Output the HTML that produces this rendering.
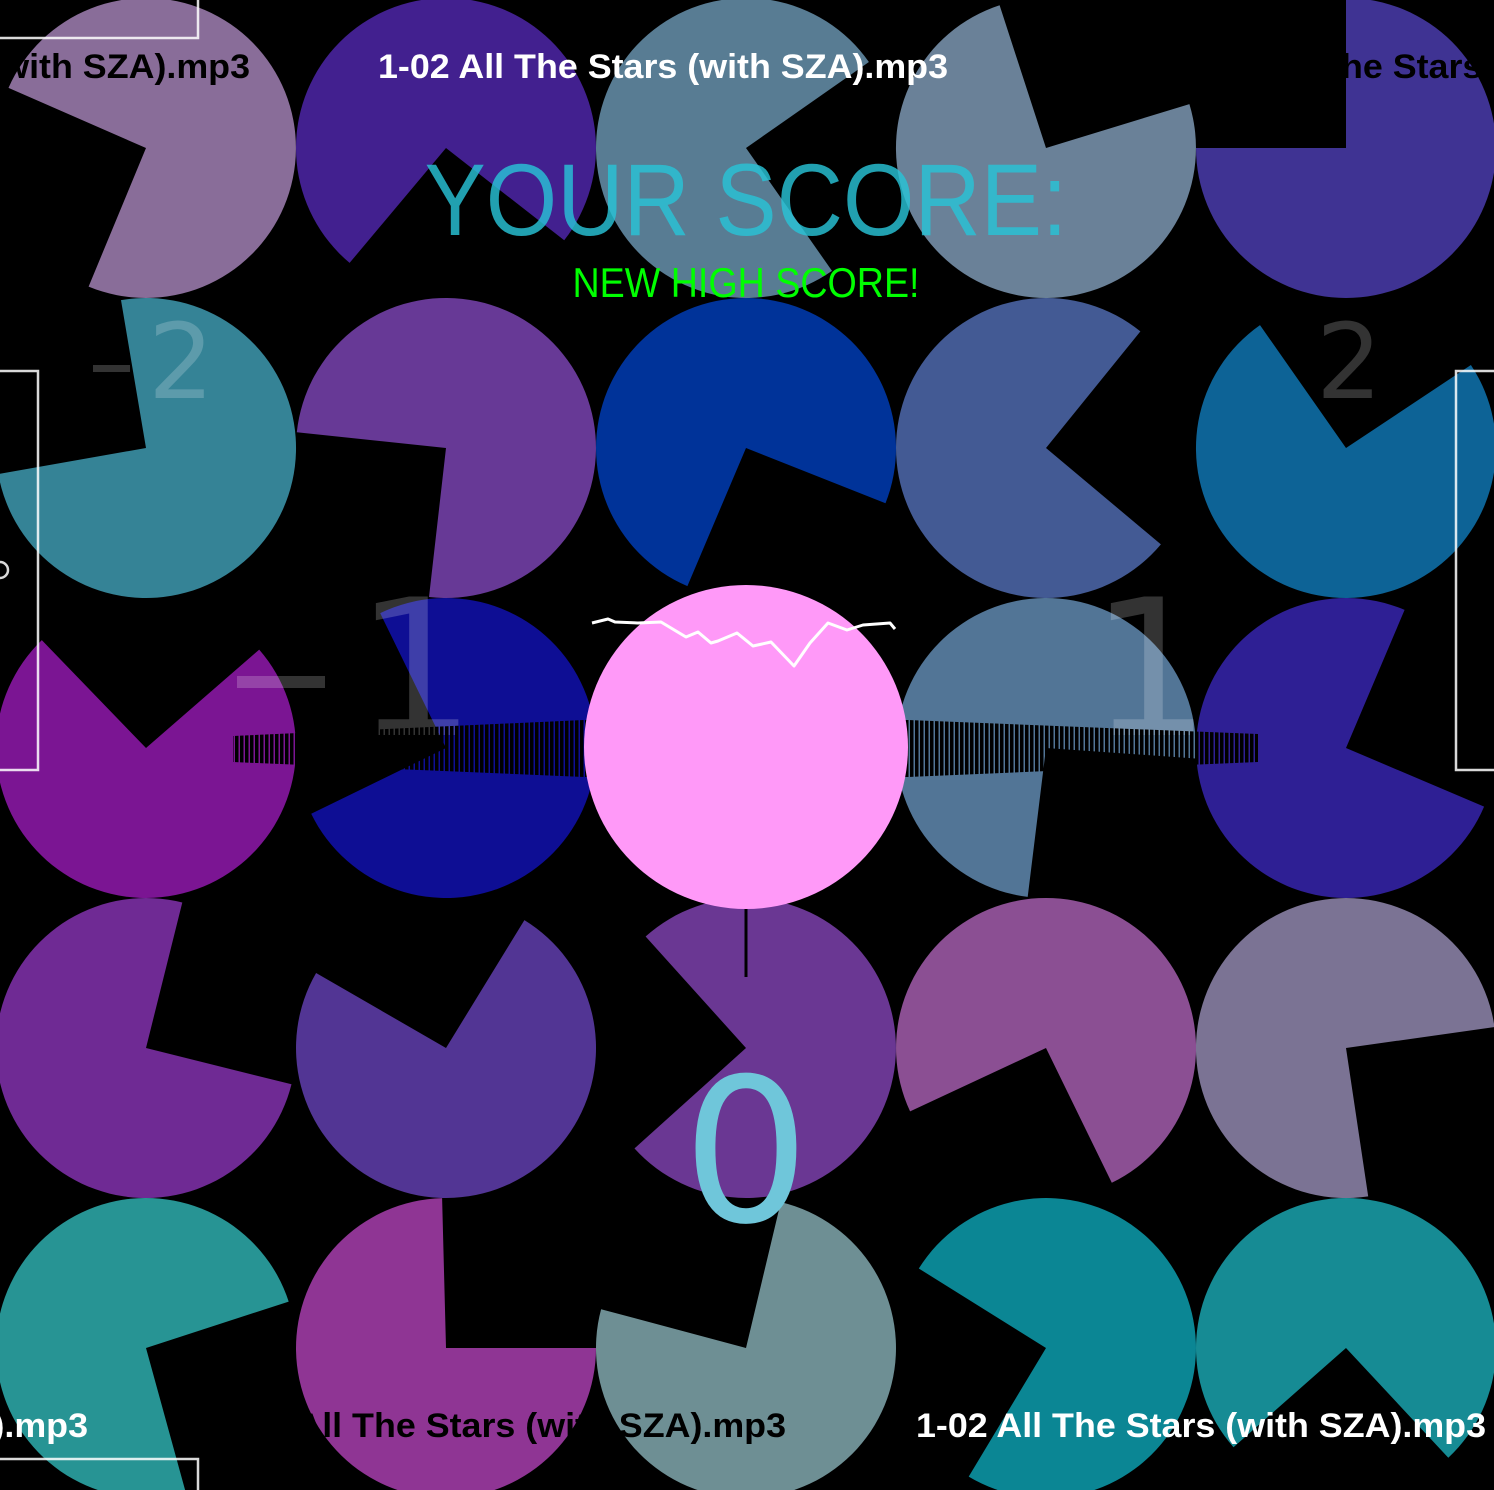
<!DOCTYPE html>
<html><head><meta charset="utf-8"><style>
html,body{margin:0;padding:0;background:#000;width:1494px;height:1490px;overflow:hidden}
svg{display:block}
</style></head><body>
<svg id="s" width="1494" height="1490" viewBox="0 0 1494 1490" xmlns="http://www.w3.org/2000/svg">
<defs>
<pattern id="wv" width="5" height="60" patternUnits="userSpaceOnUse"><rect x="0" y="0" width="3.5" height="60" fill="#000"/></pattern>
</defs>
<rect width="1494" height="1490" fill="#000"/>
<g id="pac"></g>
<!-- numbers -->
<g font-family="DejaVu Sans, sans-serif" fill="rgba(255,255,255,0.2)">
<rect x="93" y="365" width="37" height="7"/>
<text x="148" y="398" font-size="104">2</text>
<text x="1316" y="398" font-size="104">2</text>
<rect x="237" y="676" width="88" height="12"/>
<text x="355" y="735" font-size="190">1</text>
<text x="1090" y="735" font-size="190">1</text>
</g>
<!-- waveform bar -->
<polygon points="233,736 584,720 908,720 1258,734 1258,762 908,777 584,777 233,762" fill="url(#wv)"/>
<line x1="746" y1="905" x2="746" y2="977" stroke="#000" stroke-width="3"/>
<circle cx="746" cy="747" r="162" fill="#ff99f8"/>
<polyline points="592,623 608,619 615,622 638,623 661,622 686,637 698,632 711,643 718,641 737,633 753,646 771,642 794,666 810,643 828,623 847,630 863,625 890,623 895,629" fill="none" stroke="#fff" stroke-width="3" stroke-linejoin="round"/>
<!-- zero -->
<defs><linearGradient id="zg" x1="0" y1="0" x2="0" y2="1"><stop offset="0.82" stop-color="#6fc6da"/><stop offset="0.9" stop-color="#86e6a8"/></linearGradient></defs>
<text x="746" y="1221" font-family="DejaVu Sans, sans-serif" font-size="200" fill="url(#zg)" text-anchor="middle">0</text>
<!-- score title -->
<text x="746" y="235" font-family="Liberation Sans, sans-serif" font-size="102" fill="rgba(40,195,215,0.82)" text-anchor="middle" textLength="643" lengthAdjust="spacingAndGlyphs">YOUR SCORE:</text>
<text x="746" y="297" font-family="Liberation Sans, sans-serif" font-size="42" fill="#00ff00" text-anchor="middle" textLength="347" lengthAdjust="spacingAndGlyphs">NEW HIGH SCORE!</text>
<!-- song titles -->
<g font-family="Liberation Sans, sans-serif" font-weight="bold" font-size="34">
<text x="-320" y="78" fill="#000" textLength="570" lengthAdjust="spacingAndGlyphs">1-02 All The Stars (with SZA).mp3</text>
<text x="378" y="78" fill="#fff" textLength="570" lengthAdjust="spacingAndGlyphs">1-02 All The Stars (with SZA).mp3</text>
<text x="1183" y="78" fill="#000" textLength="570" lengthAdjust="spacingAndGlyphs">1-02 All The Stars (with SZA).mp3</text>
<text x="-482" y="1437" fill="#fff" textLength="570" lengthAdjust="spacingAndGlyphs">1-02 All The Stars (with SZA).mp3</text>
<text x="216" y="1437" fill="#000" textLength="570" lengthAdjust="spacingAndGlyphs">1-02 All The Stars (with SZA).mp3</text>
<text x="916" y="1437" fill="#fff" textLength="570" lengthAdjust="spacingAndGlyphs">1-02 All The Stars (with SZA).mp3</text>
</g>
<!-- rects -->
<g fill="none" stroke="rgba(255,255,255,0.85)" stroke-width="2.5">
<rect x="-5" y="-5" width="203" height="43"/>
<rect x="-5" y="371" width="43" height="399"/>
<rect x="1456" y="371" width="45" height="399"/>
<rect x="-5" y="1459" width="203" height="40"/>
<circle cx="0" cy="570" r="8"/>
</g>
</svg>
<script>
var P=[
[146,148,'#896d99',112.5,203.6],[446,148,'#42208f',38,130],[746,148,'#587c93',-35,55],[1046,148,'#6a8198',-108,-17],[1346,148,'#3f3393',-180,-90],
[146,448,'#358396',170,260.4],[446,448,'#673996',96.5,186],[746,448,'#003399',21.6,113],[1046,448,'#435a94',-51,40],[1346,448,'#0d6396',-125,-33.6],
[146,748,'#7b1593',-134,-41],[446,748,'#0e0e94',154,244],[1046,748,'#527596',4,97],[1346,748,'#2e1f94',-67,23],
[146,1048,'#6f2a94',-76,14],[446,1048,'#523594',-150,-58.5],[746,1048,'#6a3793',138,228],[1046,1048,'#8b4f93',64,155],[1346,1048,'#7b7394',-8,81.5],
[146,1348,'#279494',-18,74.6],[446,1348,'#8f3594',-91.5,0],[746,1348,'#6e8f94',-165,-76.6],[1046,1348,'#0b8694',121,212],[1346,1348,'#168b94',47,138.6]
];
var g=document.getElementById('pac'),r=150,h='';
P.forEach(function(p){var cx=p[0],cy=p[1],a1=p[3]*Math.PI/180,a2=p[4]*Math.PI/180;
var x1=cx+r*Math.cos(a2),y1=cy+r*Math.sin(a2),x2=cx+r*Math.cos(a1),y2=cy+r*Math.sin(a1);
h+='<path d="M'+cx+' '+cy+' L'+x1.toFixed(1)+' '+y1.toFixed(1)+' A150 150 0 1 1 '+x2.toFixed(1)+' '+y2.toFixed(1)+' Z" fill="'+p[2]+'"/>';});
g.innerHTML=h;
</script>
</body></html>
